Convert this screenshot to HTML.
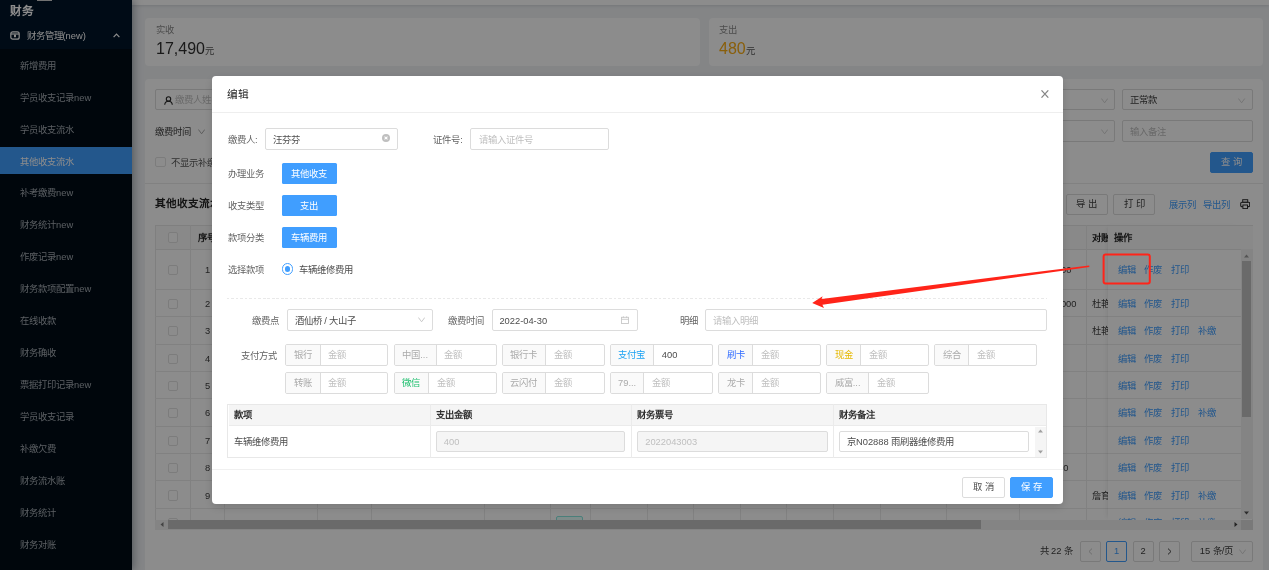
<!DOCTYPE html>
<html lang="zh-CN">
<head>
<meta charset="utf-8">
<title>财务</title>
<style>
*{box-sizing:border-box;margin:0;padding:0}
html,body{width:1269px;height:570px;overflow:hidden}
body{position:relative;background:#f0f2f5;font-family:"Liberation Sans",sans-serif;font-size:9.33px;color:#595959;line-height:1}
.a{position:absolute}
.t{position:absolute;white-space:nowrap;line-height:12px}
/* sidebar */
#side{left:0;top:0;width:132px;height:570px;background:#000c17;box-shadow:2px 0 8px rgba(0,21,41,.35);z-index:2}
#side .top{left:0;top:0;width:132px;height:48.5px;background:#001529}
#side .mi{left:20px;color:#a6adb4;font-size:9.33px}
#side .sel{left:0;top:147px;width:132px;height:27px;background:#409eff}
/* cards */
.card{background:#fff;border-radius:4px}
.inp{position:absolute;border:1px solid #dcdcdc;border-radius:2px;background:#fff;height:21.4px}
.ph{color:#bfbfbf}
.btn{position:absolute;border:1px solid #dcdcdc;border-radius:2px;background:#fff;text-align:center;color:#595959}
.lk{color:#409eff}
/* modal */
#mask{z-index:3;left:0;top:0;width:1269px;height:570px;background:rgba(0,0,0,.45)}
#mc .bb{width:54.8px;height:21.3px;background:#409eff;border-radius:1.5px;color:#fff;font-weight:500;text-align:center;line-height:22px;font-size:9.33px}
.grp{position:absolute;height:22px;border:1px solid #dcdcdc;border-radius:2px;background:#fff;overflow:hidden}
.grp i{position:absolute;left:0;top:0;bottom:0;background:#fafafa;border-right:1px solid #dcdcdc;font-style:normal;text-align:center;line-height:20.6px;color:#aaa}
.grp b{position:absolute;top:0;line-height:20.6px;font-weight:normal;color:#bfbfbf}
#modal{z-index:4;left:212px;top:76px;width:851.2px;height:428px;background:#fff;border-radius:4px;box-shadow:0 3px 10px rgba(0,0,0,.15)}
</style>
</head>
<body>
<!-- ================= BACKGROUND PAGE ================= -->
<div class="a" style="left:132px;top:0;width:1137px;height:4.6px;background:#fff;box-shadow:0 1px 3px rgba(0,21,41,.12)"></div>
<div class="a" id="side">
  <div class="a top"></div>
  <div class="a sel"></div>
  <div class="a" style="left:0;top:0;width:132px;height:570px;will-change:transform">
  <div class="a" style="left:37px;top:0;width:15px;height:1px;background:#d0d0d0"></div>
  <div class="t" style="left:9.5px;top:3.8px;font-size:11.6px;font-weight:bold;color:#fff;line-height:14px">财务</div>
  <svg class="a" style="left:10px;top:30px" width="10" height="10" viewBox="0 0 10 10"><rect x=".8" y="1.8" width="8.4" height="7.4" rx="2" fill="none" stroke="#fff" stroke-width="1.2"/><path d="M1 4h8" stroke="#fff" stroke-width="1.2"/><rect x="4" y="4.6" width="2" height="2.6" fill="#fff"/></svg>
  <div class="t" style="left:26.5px;top:29.5px;color:#fff;font-size:9.33px">财务管理(new)</div>
  <svg class="a" style="left:113px;top:33px" width="7" height="5" viewBox="0 0 7 5"><path d="M.6 4.2 3.5 1.2 6.4 4.2" fill="none" stroke="#fff" stroke-width="1.2"/></svg>
  <div class="t mi" style="top:59.8px">新增费用</div>
  <div class="t mi" style="top:91.8px">学员收支记录new</div>
  <div class="t mi" style="top:123.8px">学员收支流水</div>
  <div class="t mi" style="top:155.8px;color:#fff">其他收支流水</div>
  <div class="t mi" style="top:187.3px">补考缴费new</div>
  <div class="t mi" style="top:219.3px">财务统计new</div>
  <div class="t mi" style="top:251.3px">作废记录new</div>
  <div class="t mi" style="top:283.3px">财务款项配置new</div>
  <div class="t mi" style="top:314.8px">在线收款</div>
  <div class="t mi" style="top:346.8px">财务确收</div>
  <div class="t mi" style="top:378.8px">票据打印记录new</div>
  <div class="t mi" style="top:410.8px">学员收支记录</div>
  <div class="t mi" style="top:442.8px">补缴欠费</div>
  <div class="t mi" style="top:474.8px">财务流水账</div>
  <div class="t mi" style="top:506.8px">财务统计</div>
  <div class="t mi" style="top:538.8px">财务对账</div>
  </div>
</div>

<div class="a" id="bgw" style="left:0;top:0;width:1269px;height:570px;will-change:transform">
<!-- stat cards -->
<div class="a card" style="left:144.6px;top:18px;width:555px;height:47.6px"></div>
<div class="t" style="left:156px;top:24px;color:#8c8c8c">实收</div>
<div class="t" style="left:156px;top:39.3px;font-size:16px;line-height:20px;color:#303030">17,490<span style="font-size:9.33px;color:#595959">元</span></div>
<div class="a card" style="left:709px;top:18px;width:553.5px;height:47.6px"></div>
<div class="t" style="left:719px;top:24px;color:#8c8c8c">支出</div>
<div class="t" style="left:719px;top:39.3px;font-size:16px;line-height:20px;color:#faad14">480<span style="font-size:9.33px;color:#595959">元</span></div>

<!-- main card -->
<div class="a card" style="left:144.6px;top:79px;width:1118px;height:500px"></div>
<!--BG-CONTENT-->
<div class="inp" style="left:155.4px;top:89.33px;width:130.7px;height:20.8px"></div>
<svg class="a" style="left:163.5px;top:95.5px" width="9" height="9" viewBox="0 0 9 9"><circle cx="4.5" cy="2.9" r="2.2" fill="none" stroke="#262626" stroke-width="1.1"/><path d="M.7 8.8c.2-2.3 1.8-3.5 3.8-3.5s3.6 1.2 3.8 3.5" fill="none" stroke="#262626" stroke-width="1.1"/></svg>
<div class="t ph" style="left:175px;top:94.3px">缴费人姓名</div>
<div class="inp" style="left:984.3px;top:89.33px;width:130.7px;height:20.8px"></div>
<div class="inp" style="left:984.3px;top:120.4px;width:130.7px;height:21.6px"></div>
<div class="inp" style="left:1122.3px;top:89.33px;width:130.7px;height:20.8px"></div>
<div class="inp" style="left:1122.3px;top:120.4px;width:130.7px;height:21.6px"></div>
<div class="t" style="left:1130px;top:94.3px;color:#404040">正常款</div>
<div class="t ph" style="left:1130px;top:126.2px">输入备注</div>
<svg class="a" style="left:1100.8px;top:97.6px" width="7.2" height="5.6" viewBox="0 0 7.2 5.6"><path d="M.4 .5 3.6 4.8 6.8 .5" fill="none" stroke="#d0d0d0" stroke-width=".9"/></svg>
<svg class="a" style="left:1238.4px;top:97.6px" width="7.2" height="5.6" viewBox="0 0 7.2 5.6"><path d="M.4 .5 3.6 4.8 6.8 .5" fill="none" stroke="#d0d0d0" stroke-width=".9"/></svg>
<svg class="a" style="left:1100.8px;top:128.8px" width="7.2" height="5.6" viewBox="0 0 7.2 5.6"><path d="M.4 .5 3.6 4.8 6.8 .5" fill="none" stroke="#d0d0d0" stroke-width=".9"/></svg>
<div class="t" style="left:155.4px;top:125.8px;color:#404040">缴费时间</div>
<svg class="a" style="left:198px;top:129px" width="7.2" height="5.6" viewBox="0 0 7.2 5.6"><path d="M.4 .5 3.6 4.8 6.8 .5" fill="none" stroke="#a0a0a0" stroke-width=".9"/></svg>
<div class="a" style="left:155.4px;top:157.3px;width:10.2px;height:10.2px;border:1px solid #e2e2e2;border-radius:2px;background:#fff"></div>
<div class="t" style="left:171px;top:156.5px;color:#595959">不显示补缴</div>
<div class="btn" style="left:1210.4px;top:152.2px;width:42.8px;height:20.8px;background:#409eff;border-color:#409eff;color:#fff;line-height:19px;font-size:9.33px;letter-spacing:3px;padding-left:3px">查询</div>
<div class="a" style="left:144.6px;top:183px;width:1118px;height:1px;background:#ececec"></div>
<div class="t" style="left:155.2px;top:196.4px;font-size:10.67px;font-weight:bold;color:#262626;line-height:15px">其他收支流水</div>
<div class="btn" style="left:1065.8px;top:194.2px;width:42px;height:20.6px;line-height:19px;letter-spacing:3px;padding-left:3px;color:#404040">导出</div>
<div class="btn" style="left:1113.4px;top:194.2px;width:42px;height:20.6px;line-height:19px;letter-spacing:3px;padding-left:3px;color:#404040">打印</div>
<div class="t lk" style="left:1168.6px;top:198.6px">展示列</div>
<div class="t lk" style="left:1203.4px;top:198.6px">导出列</div>
<svg class="a" style="left:1240px;top:198.6px" width="10.4" height="10.4" viewBox="0 0 10.4 10.4"><rect x="2.7" y=".7" width="5" height="2.6" fill="none" stroke="#303030" stroke-width="1"/><rect x=".7" y="3.2" width="9" height="4.4" rx="1.2" fill="none" stroke="#303030" stroke-width="1.1"/><rect x="2.9" y="6" width="4.6" height="3.6" fill="#fff" stroke="#303030" stroke-width="1"/></svg>
<div class="a" style="left:155.2px;top:225.2px;width:1098.0px;height:305.3px;border:1px solid #e8e8e8"></div>
<div class="a" style="left:155.2px;top:225.2px;width:1098.0px;height:24.6px;background:#fafafa;border:1px solid #e8e8e8"></div>
<div class="a" style="left:155.2px;top:288.7px;width:1085.8px;height:1px;background:#ebebeb"></div>
<div class="a" style="left:155.2px;top:316.1px;width:1085.8px;height:1px;background:#ebebeb"></div>
<div class="a" style="left:155.2px;top:343.5px;width:1085.8px;height:1px;background:#ebebeb"></div>
<div class="a" style="left:155.2px;top:370.9px;width:1085.8px;height:1px;background:#ebebeb"></div>
<div class="a" style="left:155.2px;top:398.3px;width:1085.8px;height:1px;background:#ebebeb"></div>
<div class="a" style="left:155.2px;top:425.6px;width:1085.8px;height:1px;background:#ebebeb"></div>
<div class="a" style="left:155.2px;top:453.0px;width:1085.8px;height:1px;background:#ebebeb"></div>
<div class="a" style="left:155.2px;top:480.4px;width:1085.8px;height:1px;background:#ebebeb"></div>
<div class="a" style="left:155.2px;top:507.8px;width:1085.8px;height:1px;background:#ebebeb"></div>
<div class="a" style="left:189.8px;top:225.2px;width:1px;height:294.5px;background:#ebebeb"></div>
<div class="a" style="left:224.2px;top:225.2px;width:1px;height:294.5px;background:#ebebeb"></div>
<div class="a" style="left:317.3px;top:225.2px;width:1px;height:294.5px;background:#ebebeb"></div>
<div class="a" style="left:371.0px;top:225.2px;width:1px;height:294.5px;background:#ebebeb"></div>
<div class="a" style="left:483.8px;top:225.2px;width:1px;height:294.5px;background:#ebebeb"></div>
<div class="a" style="left:550.0px;top:225.2px;width:1px;height:294.5px;background:#ebebeb"></div>
<div class="a" style="left:590.3px;top:225.2px;width:1px;height:294.5px;background:#ebebeb"></div>
<div class="a" style="left:647.2px;top:225.2px;width:1px;height:294.5px;background:#ebebeb"></div>
<div class="a" style="left:693.3px;top:225.2px;width:1px;height:294.5px;background:#ebebeb"></div>
<div class="a" style="left:739.9px;top:225.2px;width:1px;height:294.5px;background:#ebebeb"></div>
<div class="a" style="left:786.0px;top:225.2px;width:1px;height:294.5px;background:#ebebeb"></div>
<div class="a" style="left:833.1px;top:225.2px;width:1px;height:294.5px;background:#ebebeb"></div>
<div class="a" style="left:879.8px;top:225.2px;width:1px;height:294.5px;background:#ebebeb"></div>
<div class="a" style="left:945.7px;top:225.2px;width:1px;height:294.5px;background:#ebebeb"></div>
<div class="a" style="left:1019.2px;top:225.2px;width:1px;height:294.5px;background:#ebebeb"></div>
<div class="a" style="left:1086.0px;top:225.2px;width:1px;height:294.5px;background:#ebebeb"></div>
<div class="a" style="left:167.6px;top:232.4px;width:10.2px;height:10.2px;border:1px solid #e2e2e2;border-radius:2px;background:#fff"></div>
<div class="t" style="left:197.8px;top:231.6px;font-weight:bold;color:#262626">序号</div>
<div class="t" style="left:1092.4px;top:231.6px;font-weight:bold;color:#262626">对账</div>
<div class="a" style="left:167.6px;top:264.5px;width:10.2px;height:10.2px;border:1px solid #e2e2e2;border-radius:2px;background:#fff"></div>
<div class="t" style="left:190.3px;width:34.4px;text-align:center;top:263.6px;color:#404040">1</div>
<div class="a" style="left:167.6px;top:298.7px;width:10.2px;height:10.2px;border:1px solid #e2e2e2;border-radius:2px;background:#fff"></div>
<div class="t" style="left:190.3px;width:34.4px;text-align:center;top:297.8px;color:#404040">2</div>
<div class="a" style="left:167.6px;top:326.09999999999997px;width:10.2px;height:10.2px;border:1px solid #e2e2e2;border-radius:2px;background:#fff"></div>
<div class="t" style="left:190.3px;width:34.4px;text-align:center;top:325.2px;color:#404040">3</div>
<div class="a" style="left:167.6px;top:353.5px;width:10.2px;height:10.2px;border:1px solid #e2e2e2;border-radius:2px;background:#fff"></div>
<div class="t" style="left:190.3px;width:34.4px;text-align:center;top:352.6px;color:#404040">4</div>
<div class="a" style="left:167.6px;top:380.9px;width:10.2px;height:10.2px;border:1px solid #e2e2e2;border-radius:2px;background:#fff"></div>
<div class="t" style="left:190.3px;width:34.4px;text-align:center;top:380.0px;color:#404040">5</div>
<div class="a" style="left:167.6px;top:408.29999999999995px;width:10.2px;height:10.2px;border:1px solid #e2e2e2;border-radius:2px;background:#fff"></div>
<div class="t" style="left:190.3px;width:34.4px;text-align:center;top:407.4px;color:#404040">6</div>
<div class="a" style="left:167.6px;top:435.59999999999997px;width:10.2px;height:10.2px;border:1px solid #e2e2e2;border-radius:2px;background:#fff"></div>
<div class="t" style="left:190.3px;width:34.4px;text-align:center;top:434.7px;color:#404040">7</div>
<div class="a" style="left:167.6px;top:463.0px;width:10.2px;height:10.2px;border:1px solid #e2e2e2;border-radius:2px;background:#fff"></div>
<div class="t" style="left:190.3px;width:34.4px;text-align:center;top:462.1px;color:#404040">8</div>
<div class="a" style="left:167.6px;top:490.4px;width:10.2px;height:10.2px;border:1px solid #e2e2e2;border-radius:2px;background:#fff"></div>
<div class="t" style="left:190.3px;width:34.4px;text-align:center;top:489.5px;color:#404040">9</div>
<div class="a" style="left:167.6px;top:517.8px;width:10.2px;height:10.2px;border:1px solid #e2e2e2;border-radius:2px;background:#fff"></div>
<div class="t" style="left:190.3px;width:34.4px;text-align:center;top:516.9px;color:#404040">10</div>
<div class="t" style="left:1041.5px;top:263.6px;color:#404040;width:30px;text-align:right">500</div>
<div class="t" style="left:1042.5px;top:297.8px;color:#404040;width:34px;text-align:right">10000</div>
<div class="t" style="left:1050.5px;top:462.1px;color:#404040;width:18px;text-align:right">50</div>
<div class="t" style="left:1092.4px;top:297.8px;color:#404040">杜艳</div>
<div class="t" style="left:1092.4px;top:325.2px;color:#404040">杜艳</div>
<div class="t" style="left:1092.4px;top:489.5px;color:#404040">詹育</div>
<div class="t" style="left:329px;top:516.6px;color:#404040">2</div>
<div class="t" style="left:490px;top:516.6px;color:#404040">2022-04-28</div>
<div class="a" style="left:556.4px;top:516.4px;width:26.4px;height:14px;border:1px solid #87e8de;background:#e6fffb;border-radius:2px"></div>
<div class="a" style="left:1108px;top:225.2px;width:133px;height:294.5px;background:#fff;box-shadow:-3px 0 5px -3px rgba(0,0,0,.12)"></div>
<div class="a" style="left:1108px;top:225.2px;width:145.2px;height:24.6px;background:#fafafa;border-top:1px solid #e8e8e8;border-bottom:1px solid #e8e8e8"></div>
<div class="t" style="left:1113.8px;top:231.6px;font-weight:bold;color:#262626">操作</div>
<div class="a" style="left:1108px;top:288.7px;width:133px;height:1px;background:#ebebeb"></div>
<div class="a" style="left:1108px;top:316.1px;width:133px;height:1px;background:#ebebeb"></div>
<div class="a" style="left:1108px;top:343.5px;width:133px;height:1px;background:#ebebeb"></div>
<div class="a" style="left:1108px;top:370.9px;width:133px;height:1px;background:#ebebeb"></div>
<div class="a" style="left:1108px;top:398.3px;width:133px;height:1px;background:#ebebeb"></div>
<div class="a" style="left:1108px;top:425.6px;width:133px;height:1px;background:#ebebeb"></div>
<div class="a" style="left:1108px;top:453.0px;width:133px;height:1px;background:#ebebeb"></div>
<div class="a" style="left:1108px;top:480.4px;width:133px;height:1px;background:#ebebeb"></div>
<div class="a" style="left:1108px;top:507.8px;width:133px;height:1px;background:#ebebeb"></div>
<div class="t lk" style="left:1117.6px;top:263.6px">编辑</div>
<div class="t lk" style="left:1144.4px;top:263.6px">作废</div>
<div class="t lk" style="left:1171px;top:263.6px">打印</div>
<div class="t lk" style="left:1117.6px;top:297.8px">编辑</div>
<div class="t lk" style="left:1144.4px;top:297.8px">作废</div>
<div class="t lk" style="left:1171px;top:297.8px">打印</div>
<div class="t lk" style="left:1117.6px;top:325.2px">编辑</div>
<div class="t lk" style="left:1144.4px;top:325.2px">作废</div>
<div class="t lk" style="left:1171px;top:325.2px">打印</div>
<div class="t lk" style="left:1197.6px;top:325.2px">补缴</div>
<div class="t lk" style="left:1117.6px;top:352.6px">编辑</div>
<div class="t lk" style="left:1144.4px;top:352.6px">作废</div>
<div class="t lk" style="left:1171px;top:352.6px">打印</div>
<div class="t lk" style="left:1117.6px;top:380.0px">编辑</div>
<div class="t lk" style="left:1144.4px;top:380.0px">作废</div>
<div class="t lk" style="left:1171px;top:380.0px">打印</div>
<div class="t lk" style="left:1117.6px;top:407.4px">编辑</div>
<div class="t lk" style="left:1144.4px;top:407.4px">作废</div>
<div class="t lk" style="left:1171px;top:407.4px">打印</div>
<div class="t lk" style="left:1197.6px;top:407.4px">补缴</div>
<div class="t lk" style="left:1117.6px;top:434.7px">编辑</div>
<div class="t lk" style="left:1144.4px;top:434.7px">作废</div>
<div class="t lk" style="left:1171px;top:434.7px">打印</div>
<div class="t lk" style="left:1117.6px;top:462.1px">编辑</div>
<div class="t lk" style="left:1144.4px;top:462.1px">作废</div>
<div class="t lk" style="left:1171px;top:462.1px">打印</div>
<div class="t lk" style="left:1117.6px;top:489.5px">编辑</div>
<div class="t lk" style="left:1144.4px;top:489.5px">作废</div>
<div class="t lk" style="left:1171px;top:489.5px">打印</div>
<div class="t lk" style="left:1197.6px;top:489.5px">补缴</div>
<div class="t lk" style="left:1117.6px;top:516.9px">编辑</div>
<div class="t lk" style="left:1144.4px;top:516.9px">作废</div>
<div class="t lk" style="left:1171px;top:516.9px">打印</div>
<div class="t lk" style="left:1197.6px;top:516.9px">补缴</div>
<div class="a" style="left:155.2px;top:519.6px;width:1098.0px;height:10.9px;background:#f1f1f1"></div>
<div class="a" style="left:168px;top:519.8px;width:813px;height:9.2px;background:#c1c1c1"></div>
<div class="a" style="left:1241.2px;top:519.6px;width:12px;height:10.9px;background:#dcdcdc"></div>
<svg class="a" style="left:159.8px;top:522px" width="4" height="5" viewBox="0 0 4 5"><path d="M3.5 0v5L.5 2.5z" fill="#7a7a7a"/></svg>
<svg class="a" style="left:1233.8px;top:522px" width="4" height="5" viewBox="0 0 4 5"><path d="M.5 0v5L3.5 2.5z" fill="#404040"/></svg>
<div class="a" style="left:144.6px;top:530.5px;width:1118px;height:40px;background:#fff"></div>
<div class="a" style="left:1241px;top:249.33px;width:12.2px;height:270px;background:#f1f1f1"></div>
<div class="a" style="left:1242.4px;top:261px;width:8.8px;height:156px;background:#c1c1c1"></div>
<svg class="a" style="left:1244.3px;top:254px" width="5" height="4" viewBox="0 0 5 4"><path d="M0 3.5h5L2.5 .5z" fill="#9a9a9a"/></svg>
<svg class="a" style="left:1244.3px;top:511px" width="5" height="4" viewBox="0 0 5 4"><path d="M0 .5h5L2.5 3.5z" fill="#505050"/></svg>
<div class="t" style="left:1039.5px;top:545px;color:#404040">共 22 条</div>
<div class="btn" style="left:1079.5px;top:541px;width:21.2px;height:20.8px;line-height:19.4px;"><svg width="5" height="7" viewBox="0 0 5 7" style="vertical-align:-1px"><path d="M4 .6 1 3.5 4 6.4" fill="none" stroke="#c8c8c8" stroke-width="1"/></svg></div>
<div class="btn" style="left:1106px;top:541px;width:21.2px;height:20.8px;line-height:19.4px;border-color:#409eff;color:#409eff">1</div>
<div class="btn" style="left:1132.5px;top:541px;width:21.2px;height:20.8px;line-height:19.4px;color:#404040">2</div>
<div class="btn" style="left:1159.1px;top:541px;width:21.3px;height:20.8px;line-height:19.4px;"><svg width="5" height="7" viewBox="0 0 5 7" style="vertical-align:-1px"><path d="M1 .6 4 3.5 1 6.4" fill="none" stroke="#404040" stroke-width="1"/></svg></div>
<div class="btn" style="left:1191.3px;top:541px;width:61.4px;height:20.8px;line-height:19.4px;text-align:left;padding-left:7.5px;color:#404040">15 条/页</div>
<svg class="a" style="left:1239px;top:549px" width="7.2" height="5.6" viewBox="0 0 7.2 5.6"><path d="M.4 .5 3.6 4.8 6.8 .5" fill="none" stroke="#d0d0d0" stroke-width=".9"/></svg>
<!--/BG-CONTENT-->
</div>

<!-- ================= MASK ================= -->
<div class="a" id="mask"></div>

<!-- ================= MODAL ================= -->
<div class="a" id="modal">
</div>
<div class="a" id="mc" style="z-index:5;left:0;top:0;width:1269px;height:570px;color:#636363;will-change:transform">
<!-- header -->
<div class="t" style="left:227.4px;top:86.6px;font-size:10.67px;font-weight:500;color:#262626;line-height:14px">编辑</div>
<svg class="a" style="left:1041px;top:90px" width="8" height="8" viewBox="0 0 8 8"><path d="M.5 .3 7.3 7.7M7.3 .3 .5 7.7" stroke="#858585" stroke-width="1.15"/></svg>
<div class="a" style="left:212px;top:112px;width:851.2px;height:1px;background:#eeeeee"></div>
<!-- row1 -->
<div class="t" style="left:228.0px;top:133.6px">缴费人:</div>
<div class="inp" style="left:265px;top:128.2px;width:133px"></div>
<div class="t" style="left:273.2px;top:133.6px;color:#4d4d4d">汪芬芬</div>
<svg class="a" style="left:382px;top:134.4px" width="8" height="8" viewBox="0 0 7 7"><circle cx="3.5" cy="3.5" r="3.5" fill="#bfbfbf"/><path d="M2.2 2.2 4.8 4.8M4.8 2.2 2.2 4.8" stroke="#fff" stroke-width=".9"/></svg>
<div class="t" style="left:433.2px;top:133.6px">证件号:</div>
<div class="inp" style="left:470px;top:128.2px;width:139.33px"></div>
<div class="t ph" style="left:478.6px;top:133.6px">请输入证件号</div>
<!-- row2-4 buttons -->
<div class="t" style="left:228.0px;top:168.2px">办理业务</div>
<div class="a bb" style="left:282px;top:163px">其他收支</div>
<div class="t" style="left:228.0px;top:200.0px">收支类型</div>
<div class="a bb" style="left:282px;top:195px">支出</div>
<div class="t" style="left:228.0px;top:231.9px">款项分类</div>
<div class="a bb" style="left:282px;top:226.8px">车辆费用</div>
<!-- row5 radio -->
<div class="t" style="left:228.0px;top:263.8px">选择款项</div>
<div class="a" style="left:282px;top:263.4px;width:11.2px;height:11.2px;border:1px solid #409eff;border-radius:50%;background:#fff"></div>
<div class="a" style="left:284.8px;top:266.2px;width:5.6px;height:5.6px;border-radius:50%;background:#409eff"></div>
<div class="t" style="left:299.2px;top:263.8px;color:#4d4d4d">车辆维修费用</div>
<!-- dashed -->
<div class="a" style="left:227.4px;top:298px;width:820px;height:1px;background:repeating-linear-gradient(90deg,#e9e9e9 0 2.5px,transparent 2.5px 4.5px)"></div>
<!--MODAL-2-->
<div class="t" style="left:241.4px;width:38px;text-align:right;top:314.8px">缴费点</div>
<div class="inp" style="left:286.8px;top:309.4px;width:146.4px"></div>
<div class="t" style="left:294.6px;top:314.8px;color:#4d4d4d">酒仙桥 / 大山子</div>
<svg class="a" style="left:417.8px;top:317.3px" width="7.2" height="5.6" viewBox="0 0 7.2 5.6"><path d="M.4 .5 3.6 4.8 6.8 .5" fill="none" stroke="#c4c4c4" stroke-width=".9"/></svg>
<div class="t" style="left:447.6px;top:314.8px">缴费时间</div>
<div class="inp" style="left:491.8px;top:309.4px;width:146.4px"></div>
<div class="t" style="left:499.4px;top:314.8px;color:#4d4d4d">2022-04-30</div>
<svg class="a" style="left:620.6px;top:315.8px" width="8" height="8" viewBox="0 0 8 8"><rect x=".5" y="1.3" width="7" height="6.2" fill="none" stroke="#c8c8c8" stroke-width=".9"/><path d="M.5 3.3h7M2.4 .3v1.6M5.6 .3v1.6" stroke="#c8c8c8" stroke-width=".9"/></svg>
<div class="t" style="left:680px;top:314.8px">明细</div>
<div class="inp" style="left:705.2px;top:309.4px;width:341.8px"></div>
<div class="t ph" style="left:713px;top:314.8px">请输入明细</div>
<div class="t" style="left:241.4px;top:349.6px">支付方式</div>
<div class="grp" style="left:285.4px;top:344px;width:103.0px"><i style="width:34.19999999999999px;">银行</i><b style="left:41.69999999999999px">金额</b></div>
<div class="grp" style="left:393.5px;top:344px;width:103.0px"><i style="width:42.30000000000001px;">中国...</i><b style="left:49.80000000000001px">金额</b></div>
<div class="grp" style="left:501.59999999999997px;top:344px;width:102.99999999999994px"><i style="width:43.599999999999966px;">银行卡</i><b style="left:51.099999999999966px">金额</b></div>
<div class="grp" style="left:609.6999999999999px;top:344px;width:103.0px"><i style="width:43.60000000000002px;color:#1ba1f2;">支付宝</i><b style="left:51.10000000000002px;color:#4d4d4d">400</b></div>
<div class="grp" style="left:717.8px;top:344px;width:103.0px"><i style="width:34.5px;color:#2f6bff;">刷卡</i><b style="left:42.0px">金额</b></div>
<div class="grp" style="left:825.9px;top:344px;width:103.0px"><i style="width:34.39999999999998px;color:#e6b800;">现金</i><b style="left:41.89999999999998px">金额</b></div>
<div class="grp" style="left:933.9999999999999px;top:344px;width:103.00000000000011px"><i style="width:34.39999999999998px;">综合</i><b style="left:41.89999999999998px">金额</b></div>
<div class="grp" style="left:285.4px;top:372px;width:103.0px"><i style="width:34.19999999999999px;">转账</i><b style="left:41.69999999999999px">金额</b></div>
<div class="grp" style="left:393.5px;top:372px;width:103.0px"><i style="width:34.60000000000002px;color:#19be6b;">微信</i><b style="left:42.10000000000002px">金额</b></div>
<div class="grp" style="left:501.59999999999997px;top:372px;width:102.99999999999994px"><i style="width:43.599999999999966px;">云闪付</i><b style="left:51.099999999999966px">金额</b></div>
<div class="grp" style="left:609.6999999999999px;top:372px;width:103.0px"><i style="width:33.799999999999955px;">79...</i><b style="left:41.299999999999955px">金额</b></div>
<div class="grp" style="left:717.8px;top:372px;width:103.0px"><i style="width:34.5px;">龙卡</i><b style="left:42.0px">金额</b></div>
<div class="grp" style="left:825.9px;top:372px;width:103.0px"><i style="width:42.5px;">威富...</i><b style="left:50.0px">金额</b></div>
<div class="a" style="left:227.4px;top:403.8px;width:819.33px;height:54.4px;border:1px solid #e8e8e8"></div>
<div class="a" style="left:229px;top:404.6px;width:817px;height:21.4px;background:#f5f5f5;border-bottom:1px solid #ebebeb"></div>
<div class="a" style="left:429.5px;top:404px;width:1px;height:54px;background:#ebebeb"></div>
<div class="a" style="left:630.9px;top:404px;width:1px;height:54px;background:#ebebeb"></div>
<div class="a" style="left:832.8px;top:404px;width:1px;height:54px;background:#ebebeb"></div>
<div class="t" style="left:234px;top:409px;font-weight:bold;color:#303030">款项</div>
<div class="t" style="left:435.8px;top:409px;font-weight:bold;color:#303030">支出金额</div>
<div class="t" style="left:637.2px;top:409px;font-weight:bold;color:#303030">财务票号</div>
<div class="t" style="left:839px;top:409px;font-weight:bold;color:#303030">财务备注</div>
<div class="t" style="left:234px;top:435.6px;color:#4d4d4d">车辆维修费用</div>
<div class="inp" style="left:436px;top:431.2px;width:189.33px;height:20.4px;background:#f5f5f5"></div>
<div class="t ph" style="left:443.8px;top:435.6px">400</div>
<div class="inp" style="left:637.4px;top:431.2px;width:190.2px;height:20.4px;background:#f5f5f5"></div>
<div class="t ph" style="left:645.2px;top:435.6px">2022043003</div>
<div class="inp" style="left:839.2px;top:431.2px;width:190.2px;height:20.4px"></div>
<div class="t" style="left:847px;top:435.6px;color:#4d4d4d">京N02888 雨刷器维修费用</div>
<div class="a" style="left:1035px;top:426.8px;width:11px;height:30.4px;background:#f5f5f5"></div>
<svg class="a" style="left:1038.4px;top:429.33px" width="5" height="4" viewBox="0 0 5 4"><path d="M0 3.5h5L2.5 .5z" fill="#a0a0a0"/></svg>
<svg class="a" style="left:1038.4px;top:450.4px" width="5" height="4" viewBox="0 0 5 4"><path d="M0 .5h5L2.5 3.5z" fill="#a0a0a0"/></svg>
<div class="a" style="left:212px;top:469px;width:851.2px;height:1px;background:#f0f0f0"></div>
<div class="btn" style="left:962px;top:477px;width:42.8px;height:21.2px;line-height:19.8px;letter-spacing:3px;padding-left:3px;color:#4d4d4d">取消</div>
<div class="btn" style="left:1010.4px;top:477px;width:42.6px;height:21.2px;line-height:19.8px;letter-spacing:3px;padding-left:3px;background:#409eff;border-color:#409eff;color:#fff;font-weight:500">保存</div>
<!--/MODAL-2-->
</div>

<!-- ================= ANNOTATION ================= -->
<!--ANNOT-->
<svg class="a" style="left:0;top:0;z-index:6" width="1269" height="570" viewBox="0 0 1269 570">
<rect x="1103.6" y="254.6" width="46.2" height="29" rx="2" fill="none" stroke="#ff2419" stroke-width="2"/>
<path d="M1089.2 265.4 L821.6 299 L822.6 296.2 L812.2 303 L824 308 L822.4 304.8 L1089.4 266.9 Z" fill="#ff2419"/>
</svg>
<!--/ANNOT-->
</body>
</html>
